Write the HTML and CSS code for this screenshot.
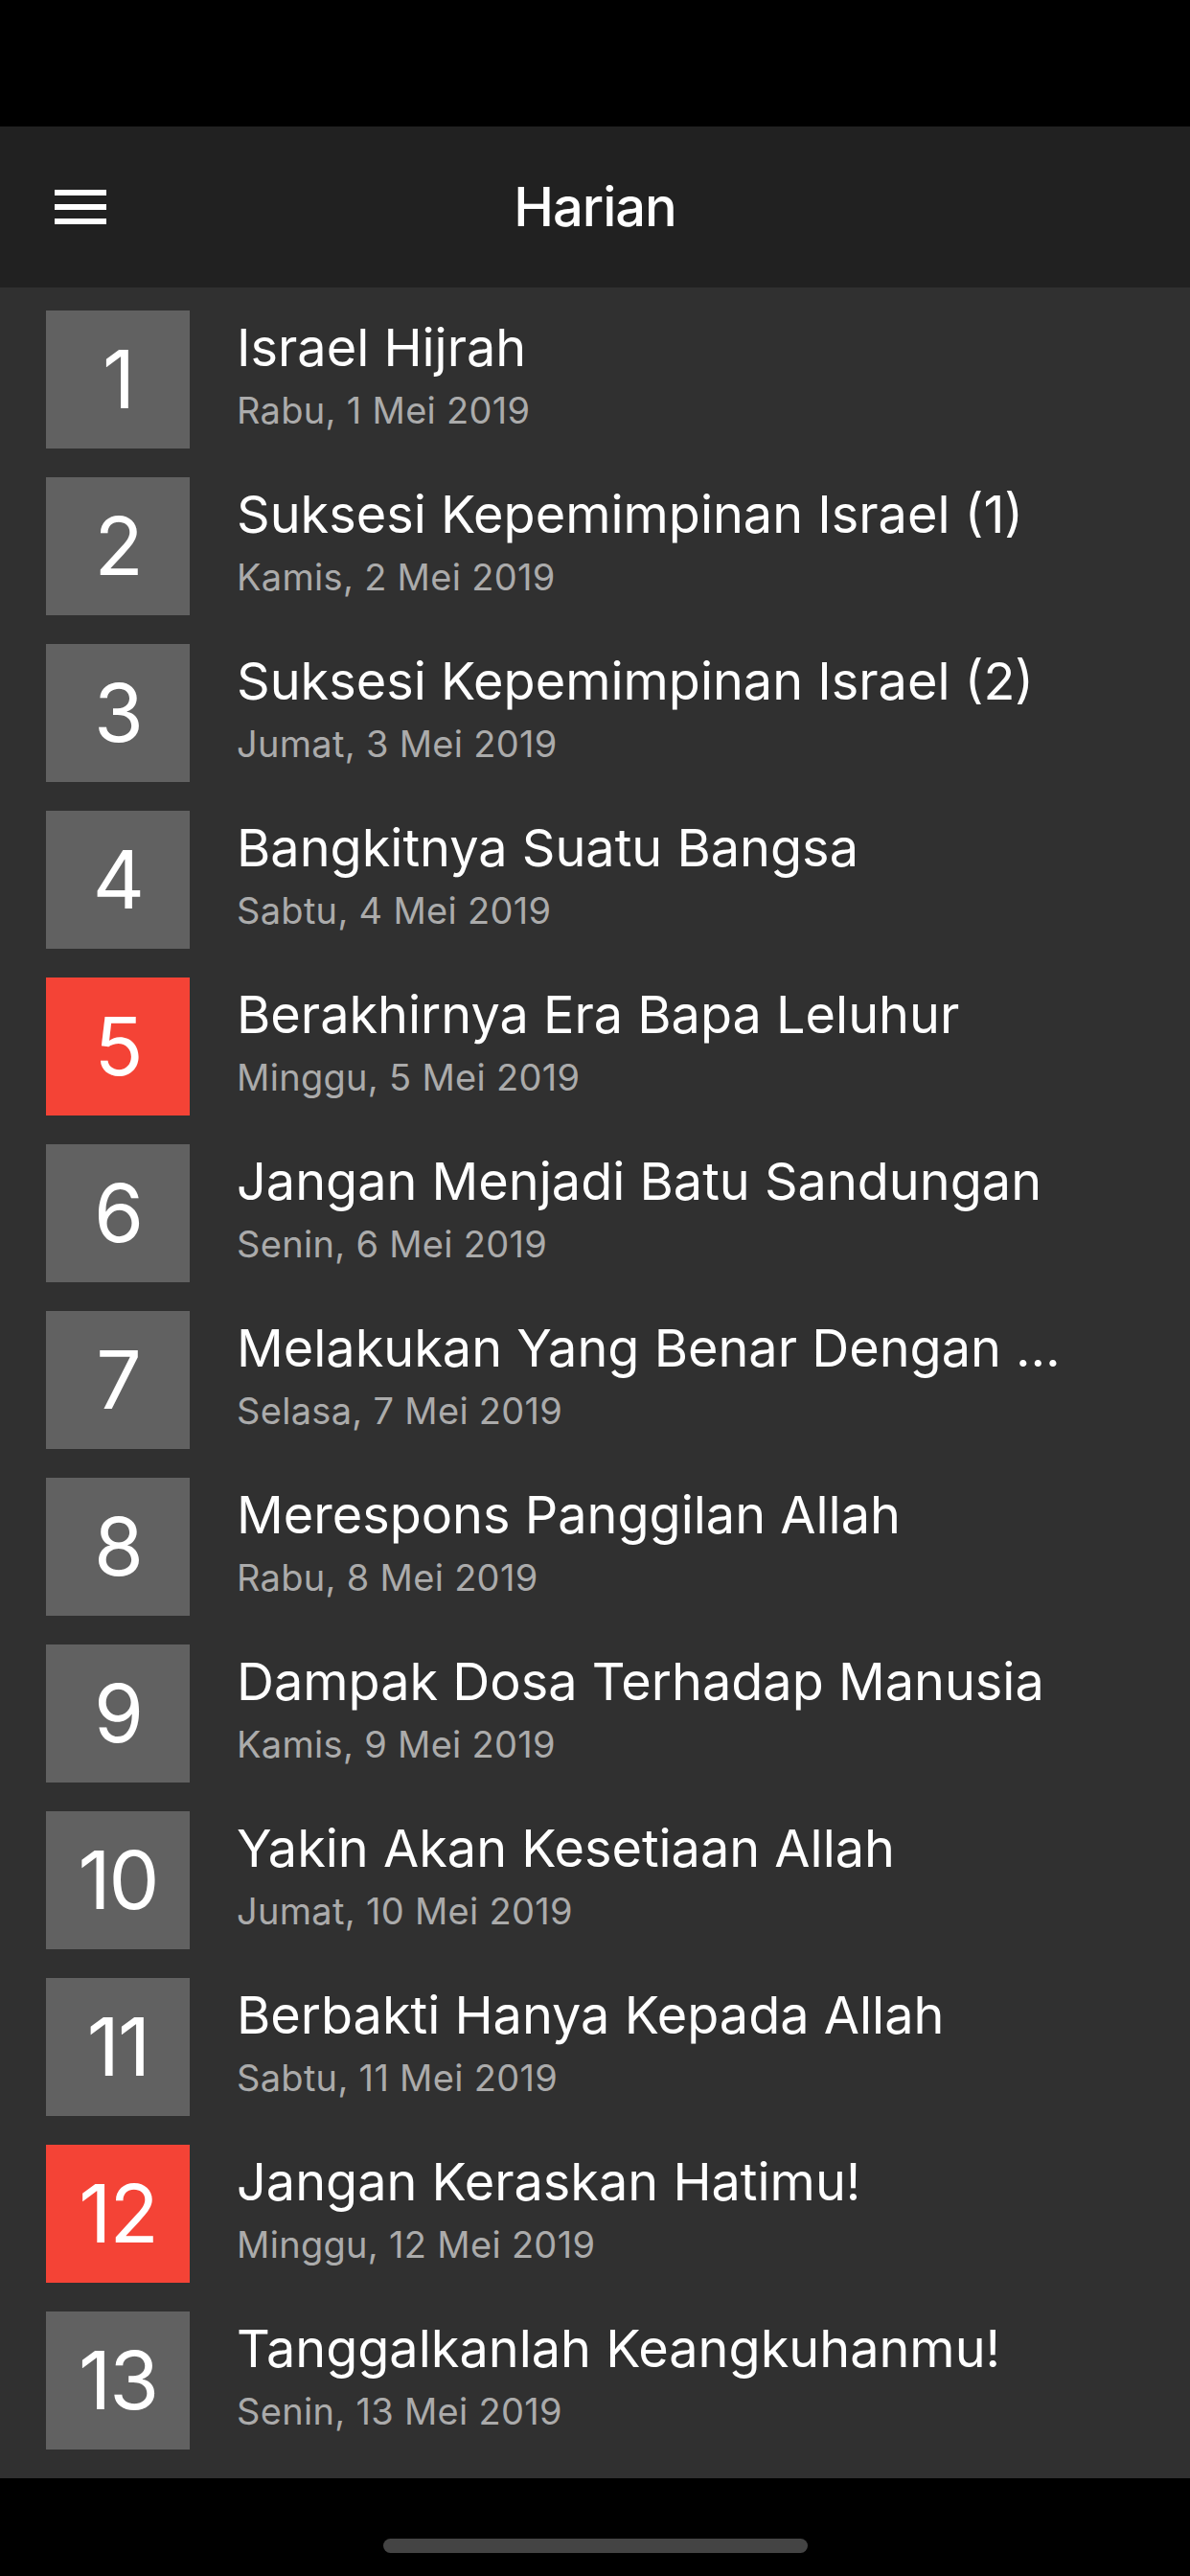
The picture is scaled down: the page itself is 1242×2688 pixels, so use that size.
FILE: index.html
```html
<!DOCTYPE html>
<html>
	<head>
		<title>Harian</title>
		<link rel="stylesheet" href="styles.css">
	</head>
	<body>
		<div class="statusbar"></div>
		<div class="appbar">
			<div class="menu">
				<span></span><span></span><span></span>
			</div>
			<div class="title">Harian</div>
			<div></div>
		</div>
		<ul class="days">
			<li class="day"><div class="num">1</div><div class="text"><p class="name">Israel Hijrah</p><p class="date">Rabu, 1 Mei 2019</p></div></li>
			<li class="day"><div class="num">2</div><div class="text"><p class="name">Suksesi Kepemimpinan Israel (1)</p><p class="date">Kamis, 2 Mei 2019</p></div></li>
			<li class="day"><div class="num">3</div><div class="text"><p class="name">Suksesi Kepemimpinan Israel (2)</p><p class="date">Jumat, 3 Mei 2019</p></div></li>
			<li class="day"><div class="num">4</div><div class="text"><p class="name">Bangkitnya Suatu Bangsa</p><p class="date">Sabtu, 4 Mei 2019</p></div></li>
			<li class="day"><div class="num sunday">5</div><div class="text"><p class="name">Berakhirnya Era Bapa Leluhur</p><p class="date">Minggu, 5 Mei 2019</p></div></li>
			<li class="day"><div class="num">6</div><div class="text"><p class="name">Jangan Menjadi Batu Sandungan</p><p class="date">Senin, 6 Mei 2019</p></div></li>
			<li class="day"><div class="num">7</div><div class="text"><p class="name">Melakukan Yang Benar Dengan …</p><p class="date">Selasa, 7 Mei 2019</p></div></li>
			<li class="day"><div class="num">8</div><div class="text"><p class="name">Merespons Panggilan Allah</p><p class="date">Rabu, 8 Mei 2019</p></div></li>
			<li class="day"><div class="num">9</div><div class="text"><p class="name">Dampak Dosa Terhadap Manusia</p><p class="date">Kamis, 9 Mei 2019</p></div></li>
			<li class="day"><div class="num">10</div><div class="text"><p class="name">Yakin Akan Kesetiaan Allah</p><p class="date">Jumat, 10 Mei 2019</p></div></li>
			<li class="day"><div class="num">11</div><div class="text"><p class="name">Berbakti Hanya Kepada Allah</p><p class="date">Sabtu, 11 Mei 2019</p></div></li>
			<li class="day"><div class="num sunday">12</div><div class="text"><p class="name">Jangan Keraskan Hatimu!</p><p class="date">Minggu, 12 Mei 2019</p></div></li>
			<li class="day"><div class="num">13</div><div class="text"><p class="name">Tanggalkanlah Keangkuhanmu!</p><p class="date">Senin, 13 Mei 2019</p></div></li>
		</ul>
		<div class="homebar"><div class="indicator"></div></div>
	</body>
</html>
```

FILE: styles.css
```css
body {
	margin: 0;
	background-color: #000;
	font-family: Inter, "Noto Sans", sans-serif;
	color: #fff;
}

.statusbar {
	height: 132px;
	background-color: #000;
}

.appbar {
	height: 168px;
	background-color: #212121;
	display: grid;
	grid-template-columns: 1fr auto 1fr;
	align-items: center;
}
.menu {
	display: flex;
	flex-direction: column;
	gap: 9px;
	width: 54px;
	margin-left: 57px;
}
.menu span {
	display: block;
	height: 6px;
	background-color: #fff;
}
.title {
	font-size: 56px;
	font-weight: 500;
	line-height: 168px;
	letter-spacing: -1px;
}

.days {
	list-style: none;
	margin: 0;
	padding: 24px 0 30px;
	background-color: #303030;
	display: flex;
	flex-direction: column;
	gap: 30px;
}
.day {
	display: flex;
	padding: 0 48px;
}
.num {
	flex: none;
	width: 150px;
	height: 144px;
	background-color: #616161;
	font-size: 84px;
	line-height: 144px;
	text-align: center;
	letter-spacing: -2px;
}
.num.sunday { background-color: #f44336; }

.text {
	flex: 1;
	min-width: 0;
	padding: 4px 0 0 49px;
}
.text p { margin: 0; }
.name {
	font-size: 54px;
	line-height: 70px;
	white-space: nowrap;
}
.date {
	margin-top: 6px !important;
	font-size: 38px;
	line-height: 48px;
	letter-spacing: 0.3px;
	color: #ababab;
}

.homebar {
	height: 102px;
	padding-top: 63px;
	box-sizing: border-box;
}
.indicator {
	width: 443px;
	height: 15px;
	margin: 0 auto;
	border-radius: 8px;
	background-color: #444;
}
```
